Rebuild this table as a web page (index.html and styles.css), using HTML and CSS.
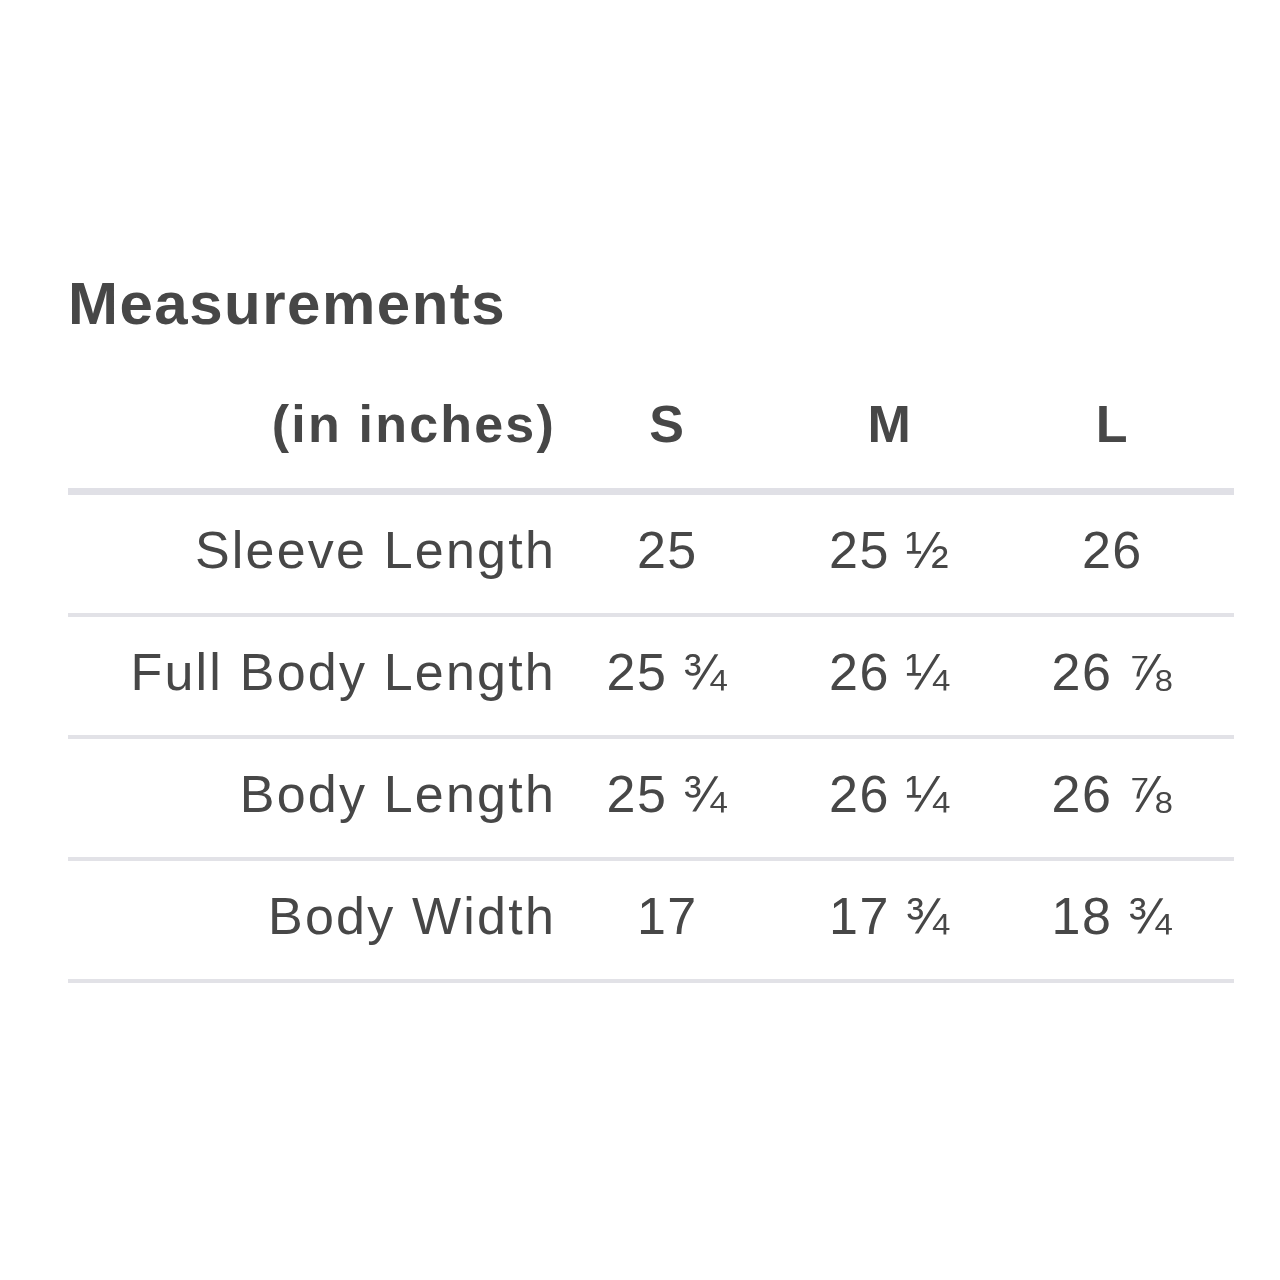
FILE: index.html
```html
<!DOCTYPE html>
<html>
<head>
<meta charset="utf-8">
<link rel="stylesheet" href="styles.css">
</head>
<body>
<div class="page">
  <h1 class="title">Measurements</h1>
  <div class="sizes">
    <div class="row head">
      <div class="label">(in inches)</div>
      <div class="val">S</div>
      <div class="val">M</div>
      <div class="val">L</div>
    </div>
    <div class="row">
      <div class="label">Sleeve Length</div>
      <div class="val">25</div>
      <div class="val">25 ½</div>
      <div class="val">26</div>
    </div>
    <div class="row">
      <div class="label">Full Body Length</div>
      <div class="val">25 ¾</div>
      <div class="val">26 ¼</div>
      <div class="val">26 ⅞</div>
    </div>
    <div class="row">
      <div class="label">Body Length</div>
      <div class="val">25 ¾</div>
      <div class="val">26 ¼</div>
      <div class="val">26 ⅞</div>
    </div>
    <div class="row">
      <div class="label">Body Width</div>
      <div class="val">17</div>
      <div class="val">17 ¾</div>
      <div class="val">18 ¾</div>
    </div>
  </div>
</div>
</body>
</html>
```
FILE: styles.css
```css
html, body {
  margin: 0;
  padding: 0;
  background: #ffffff;
}
body {
  font-family: "Liberation Sans", Arial, sans-serif;
  color: #474747;
}
.page {
  padding: 269px 46px 0 68px;
}
.title {
  margin: 0;
  font-size: 60px;
  line-height: 70px;
  font-weight: bold;
  letter-spacing: 1.5px;
}
.sizes {
  margin-top: 21px;
}
.row {
  box-sizing: border-box;
  display: grid;
  grid-template-columns: 488px 222.5px 222.5px 222.5px 1fr;
  align-items: center;
  height: 122px;
  padding-bottom: 8px;
  border-bottom: 4px solid #e2e2e7;
  font-size: 52px;
  letter-spacing: 1.4px;
}
.row.head {
  height: 135px;
  padding-bottom: 0;
  border-bottom: 7px solid #e0e0e6;
  font-weight: bold;
}
.label {
  text-align: right;
  letter-spacing: 2.2px;
  white-space: nowrap;
}
.val {
  text-align: center;
  white-space: nowrap;
}
```
